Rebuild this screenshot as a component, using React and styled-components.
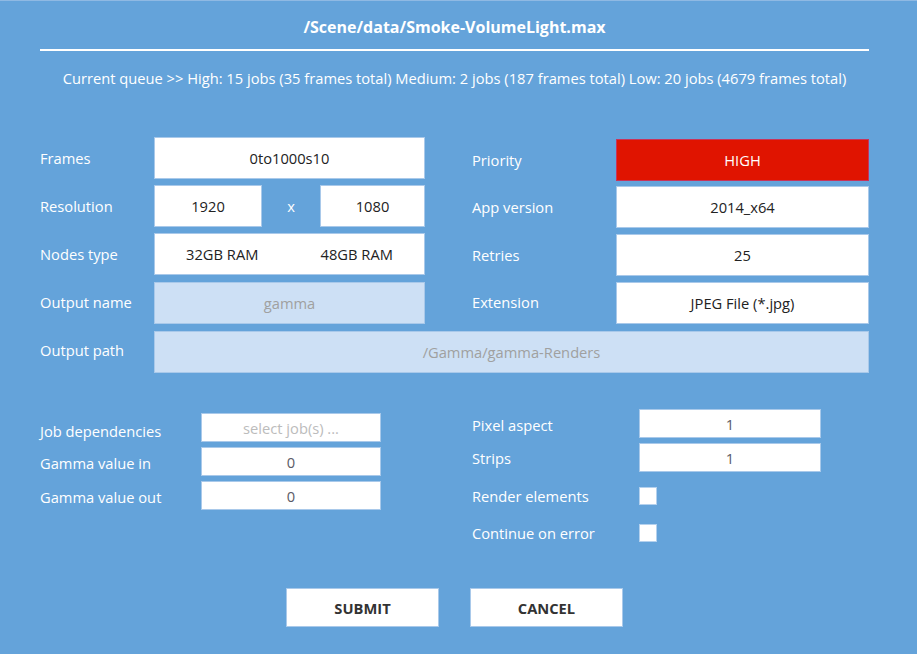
import React from 'react';
import styled, { createGlobalStyle } from 'styled-components';

const GlobalStyle = createGlobalStyle`
  html, body {
    margin: 0;
    padding: 0;
    background: #64a3da;
  }
  body {
    font-family: 'Open Sans', 'Liberation Sans', sans-serif;
  }
`;

const Page = styled.div`
  min-height: 654px;
  box-sizing: border-box;
  border-top: 1px solid #8fb9e3;
  padding: 16px 48px 0 40px;
  color: #fff;
`;

const Title = styled.h1`
  margin: 0;
  font-size: 16px;
  line-height: 20px;
  font-weight: 700;
  text-align: center;
`;

const Rule = styled.hr`
  margin: 12px 0 0;
  border: 0;
  height: 2px;
  background: #fff;
`;

const Queue = styled.p`
  margin: 17px 0 0;
  font-size: 14.7px;
  line-height: 20px;
  text-align: center;
`;

const MainGrid = styled.div`
  margin-top: 49px;
  display: grid;
  grid-template-columns: 114px 271px 47px 144px 253px;
  grid-auto-rows: 42px;
  row-gap: 6px;
`;

const Label = styled.div`
  display: flex;
  align-items: center;
  font-size: 14.7px;
  grid-column: ${(p) => p.$col || 'auto'};
  padding-top: ${(p) => p.$shift || 0}px;
`;

const Field = styled.div`
  display: flex;
  align-items: center;
  justify-content: ${(p) => (p.$split ? 'space-around' : 'center')};
  box-sizing: border-box;
  height: ${(p) => p.$h || 42}px;
  width: ${(p) => (p.$w ? `${p.$w}px` : 'auto')};
  background: ${(p) => (p.$red ? '#e01400' : p.$disabled ? '#cde0f5' : '#fff')};
  border: 1px solid ${(p) => (p.$red ? '#c8335a' : '#a9c9ea')};
  color: ${(p) => (p.$red ? '#fff' : p.$disabled ? '#a0a0a0' : p.$muted ? '#5a5a66' : '#222')};
  font-size: 14.7px;
  grid-column: ${(p) => p.$col || 'auto'};
  margin-top: ${(p) => p.$shift || 0}px;
`;

const Placeholder = styled.span`
  color: #bcbcbc;
`;

const ResolutionRow = styled.div`
  display: flex;
  align-items: center;
`;

const Times = styled.span`
  flex: 1;
  text-align: center;
  font-size: 14.7px;
`;

const Split = styled.span`
  width: 50%;
  text-align: center;
`;

const Lower = styled.div`
  margin-top: 38px;
  display: grid;
  grid-template-columns: 432px 1fr;
  align-items: start;
`;

const Column = styled.div`
  display: flex;
  flex-direction: column;
  gap: 5px;
  padding-top: ${(p) => p.$top || 0}px;
`;

const Row = styled.div`
  display: flex;
  align-items: center;
  height: ${(p) => p.$h || 29}px;
`;

const RowLabel = styled.div`
  width: ${(p) => p.$w}px;
  font-size: 14.7px;
  padding-top: ${(p) => p.$down || 0}px;
`;

const Checks = styled.div`
  display: flex;
  flex-direction: column;
`;

const Checkbox = styled.span`
  display: block;
  width: 18px;
  height: 18px;
  box-sizing: border-box;
  background: #fff;
  border: 1px solid #b4d1ee;
`;

const Actions = styled.div`
  display: flex;
  justify-content: center;
  gap: 31px;
  margin-top: 37px;
`;

const Button = styled.button`
  width: 153px;
  height: 39px;
  background: #fff;
  border: 1px solid #a9c9ea;
  font-family: 'Open Sans', 'Liberation Sans', sans-serif;
  font-size: 14.7px;
  font-weight: 700;
  color: #333;
  cursor: pointer;
`;

export default function App() {
  return (
    <>
      <GlobalStyle />
      <Page>
        <Title>/Scene/data/Smoke-VolumeLight.max</Title>
        <Rule />
        <Queue>
          Current queue &gt;&gt; High: 15 jobs (35 frames total) Medium: 2 jobs (187 frames total) Low: 20 jobs (4679 frames total)
        </Queue>

        <MainGrid>
          <Label>Frames</Label>
          <Field>0to1000s10</Field>
          <Label $col="4" $shift={4}>Priority</Label>
          <Field $red $shift={2}>HIGH</Field>

          <Label>Resolution</Label>
          <ResolutionRow>
            <Field $w={108}>1920</Field>
            <Times>x</Times>
            <Field $w={105}>1080</Field>
          </ResolutionRow>
          <Label $col="4" $shift={2}>App version</Label>
          <Field $shift={1}>2014_x64</Field>

          <Label>Nodes type</Label>
          <Field $split>
            <Split>32GB RAM</Split>
            <Split>48GB RAM</Split>
          </Field>
          <Label $col="4" $shift={2}>Retries</Label>
          <Field $shift={1}>25</Field>

          <Label>Output name</Label>
          <Field $disabled $shift={1}>gamma</Field>
          <Label $col="4">Extension</Label>
          <Field $shift={1}>JPEG File (*.jpg)</Field>

          <Label>Output path</Label>
          <Field $disabled $col="2 / 6" $shift={2}>/Gamma/gamma-Renders</Field>
        </MainGrid>

        <Lower>
          <Column $top={4}>
            <Row>
              <RowLabel $w={161} $down={6}>Job dependencies</RowLabel>
              <Field $w={180} $h={29}><Placeholder>select job(s) ...</Placeholder></Field>
            </Row>
            <Row>
              <RowLabel $w={161} $down={3}>Gamma value in</RowLabel>
              <Field $w={180} $h={29} $muted>0</Field>
            </Row>
            <Row>
              <RowLabel $w={161} $down={2}>Gamma value out</RowLabel>
              <Field $w={180} $h={29} $muted>0</Field>
            </Row>
          </Column>

          <Column>
            <Row>
              <RowLabel $w={167} $down={3}>Pixel aspect</RowLabel>
              <Field $w={182} $h={29} $muted>1</Field>
            </Row>
            <Row>
              <RowLabel $w={167}>Strips</RowLabel>
              <Field $w={182} $h={29} $muted>1</Field>
            </Row>
            <Checks>
              <Row $h={37}>
                <RowLabel $w={167}>Render elements</RowLabel>
                <Checkbox />
              </Row>
              <Row $h={37}>
                <RowLabel $w={167}>Continue on error</RowLabel>
                <Checkbox />
              </Row>
            </Checks>
          </Column>
        </Lower>

        <Actions>
          <Button>SUBMIT</Button>
          <Button>CANCEL</Button>
        </Actions>
      </Page>
    </>
  );
}
